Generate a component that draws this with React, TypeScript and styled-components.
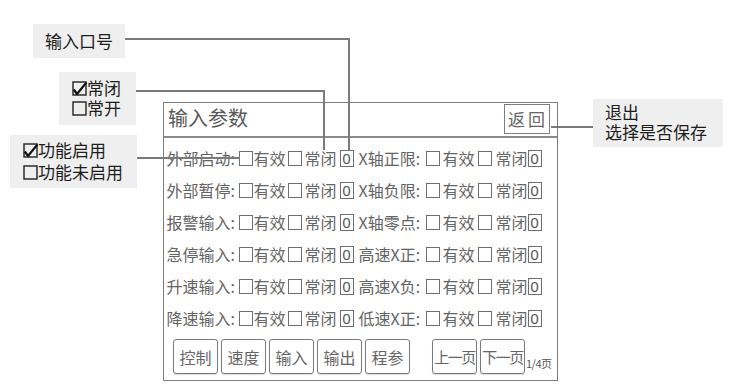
import React from "react";
import styled, { createGlobalStyle } from "styled-components";

const Global = createGlobalStyle`
  html, body { margin: 0; padding: 0; background: #fff; }
  body { font-family: "Noto Sans CJK SC", "Noto Sans", sans-serif; }
  * { box-sizing: border-box; }
`;

const Canvas = styled.div`
  position: relative;
  width: 744px;
  height: 389px;
  overflow: hidden;
  background: #fff;
  display: flex;
  align-items: flex-start;
  padding: 102px 0 0 163px;
`;

const Panel = styled.div`
  width: 395px;
  border: 1.5px solid #7d7d7d;
  display: flex;
  flex-direction: column;
  color: #666;
  font-family: "Noto Sans CJK SC", sans-serif;
`;

const Header = styled.div`
  height: 35px;
  border-bottom: 2px solid #8a8a8a;
  display: flex;
  justify-content: space-between;
  align-items: flex-start;
  padding: 0 7.5px 0 4px;
`;

const Title = styled.div`
  font-size: 20px;
  line-height: 20px;
  margin-top: 5px;
  color: #585858;
`;

const BackButton = styled.div`
  width: 46px;
  height: 30px;
  margin-top: 0.5px;
  border: 1.5px solid #7d7d7d;
  display: flex;
  align-items: center;
  justify-content: center;
  font-size: 17px;
  line-height: 17px;
  letter-spacing: 3px;
  padding-left: 3px;
  white-space: nowrap;
  color: #666;
`;

const Body = styled.div`
  display: flex;
  flex-direction: column;
  padding: 4px 0 0 2.5px;
`;

const Row = styled.div`
  height: 32px;
  display: grid;
  grid-template-columns: 72px 15px 34px 17px 35px 14px 5px 67px 17px 35px 18px 32px 15px;
  align-items: center;
  font-size: 16px;
  line-height: 16px;
  white-space: nowrap;
`;

const Label = styled.span`
  color: #636363;
`;

const Opt = styled.span`
  color: #666;
`;

const Check = styled.span`
  display: block;
  width: 14px;
  height: 15px;
  border: 1.5px solid #6f6f6f;
`;

const Zero = styled.span`
  display: flex;
  align-items: center;
  justify-content: center;
  width: 14px;
  height: 17px;
  border: 1.5px solid #6f6f6f;
  font-size: 15px;
  line-height: 15px;
  color: #555;
  font-family: "Noto Sans", sans-serif;
`;

const Spacer = styled.span``;

const Footer = styled.div`
  display: flex;
  align-items: flex-end;
  padding: 5px 0 6px 9px;
  gap: 3px;
`;

const Btn = styled.div<{ $wide?: boolean; $push?: boolean }>`
  width: 45px;
  height: 35px;
  border: 1.5px solid #7a7a7a;
  border-radius: 3px;
  box-shadow: 0 1px 1px rgba(0, 0, 0, 0.15);
  display: flex;
  align-items: center;
  justify-content: center;
  white-space: nowrap;
  font-size: ${(p) => (p.$wide ? "15px" : "16px")};
  letter-spacing: ${(p) => (p.$wide ? "-1.5px" : "0")};
  color: #666;
  margin-left: ${(p) => (p.$push ? "19px" : "0")};
`;

const PageNo = styled.span`
  font-size: 11px;
  line-height: 11px;
  color: #555;
  margin: 0 0 5px -2px;
  letter-spacing: -0.5px;
  white-space: nowrap;
`;

const Note = styled.div<{ $x: number; $y: number; $w: number; $h: number; $pt: number; $pl: number; $lh: number }>`
  position: absolute;
  left: ${(p) => p.$x}px;
  top: ${(p) => p.$y}px;
  width: ${(p) => p.$w}px;
  height: ${(p) => p.$h}px;
  padding: ${(p) => p.$pt}px 0 0 ${(p) => p.$pl}px;
  background: #efefef;
  font-family: "Noto Sans CJK SC", sans-serif;
  font-size: 17px;
  line-height: ${(p) => p.$lh}px;
  color: #1e1e1e;
  white-space: nowrap;
`;

const NoteLine = styled.div`
  display: flex;
  align-items: center;
`;

const Lines = styled.svg`
  position: absolute;
  left: 0;
  top: 0;
  pointer-events: none;
`;

const Mark = styled.svg`
  flex: none;
  width: 15px;
  height: 16px;
`;

function BoxIcon({ checked }: { checked?: boolean }) {
  return (
    <Mark viewBox="0 0 15 16">
      <rect x="1" y="2" width="13" height="13" fill="none" stroke="#222" strokeWidth="1.4" />
      {checked && (
        <path d="M1.8 9.5 L5 14 L14.5 2.5" fill="none" stroke="#111" strokeWidth="2.2" strokeLinejoin="round" />
      )}
    </Mark>
  );
}

type RowData = [string, string];
const rows: RowData[] = [
  ["外部启动:", "X轴正限:"],
  ["外部暂停:", "X轴负限:"],
  ["报警输入:", "X轴零点:"],
  ["急停输入:", "高速X正:"],
  ["升速输入:", "高速X负:"],
  ["降速输入:", "低速X正:"],
];

function ParamRow({ left, right }: { left: string; right: string }) {
  return (
    <Row>
      <Label>{left}</Label>
      <Check />
      <Opt>有效</Opt>
      <Check />
      <Opt>常闭</Opt>
      <Zero>0</Zero>
      <Spacer />
      <Label>{right}</Label>
      <Check />
      <Opt>有效</Opt>
      <Check />
      <Opt>常闭</Opt>
      <Zero>0</Zero>
    </Row>
  );
}

export default function App() {
  return (
    <>
      <Global />
      <Canvas>
        <Panel>
          <Header>
            <Title>输入参数</Title>
            <BackButton>返回</BackButton>
          </Header>
          <Body>
            {rows.map(([l, r]) => (
              <ParamRow key={l} left={l} right={r} />
            ))}
          </Body>
          <Footer>
            <Btn>控制</Btn>
            <Btn>速度</Btn>
            <Btn>输入</Btn>
            <Btn>输出</Btn>
            <Btn>程参</Btn>
            <Btn $wide $push>上一页</Btn>
            <Btn $wide>下一页</Btn>
            <PageNo>1/4页</PageNo>
          </Footer>
        </Panel>

        <Note $x={33} $y={24} $w={92} $h={34} $pt={6} $pl={12} $lh={22}>
          输入口号
        </Note>
        <Note $x={59} $y={72} $w={77} $h={53} $pt={6} $pl={13} $lh={20}>
          <NoteLine><BoxIcon checked />常闭</NoteLine>
          <NoteLine><BoxIcon />常开</NoteLine>
        </Note>
        <Note $x={10} $y={135} $w={127} $h={53} $pt={4} $pl={13} $lh={22}>
          <NoteLine><BoxIcon checked />功能启用</NoteLine>
          <NoteLine><BoxIcon />功能未启用</NoteLine>
        </Note>
        <Note $x={593} $y={99} $w={130} $h={48} $pt={3} $pl={12} $lh={20}>
          <div>退出</div>
          <div>选择是否保存</div>
        </Note>

        <Lines width="744" height="389" viewBox="0 0 744 389">
          <g fill="none" stroke="#7a7a7a" strokeWidth="2">
            <polyline points="125,39 349,39 349,150" />
            <polyline points="136,91 324,91 324,150" />
            <line x1="137" y1="158" x2="240" y2="158" />
            <line x1="551" y1="127" x2="593" y2="127" />
          </g>
        </Lines>
      </Canvas>
    </>
  );
}
